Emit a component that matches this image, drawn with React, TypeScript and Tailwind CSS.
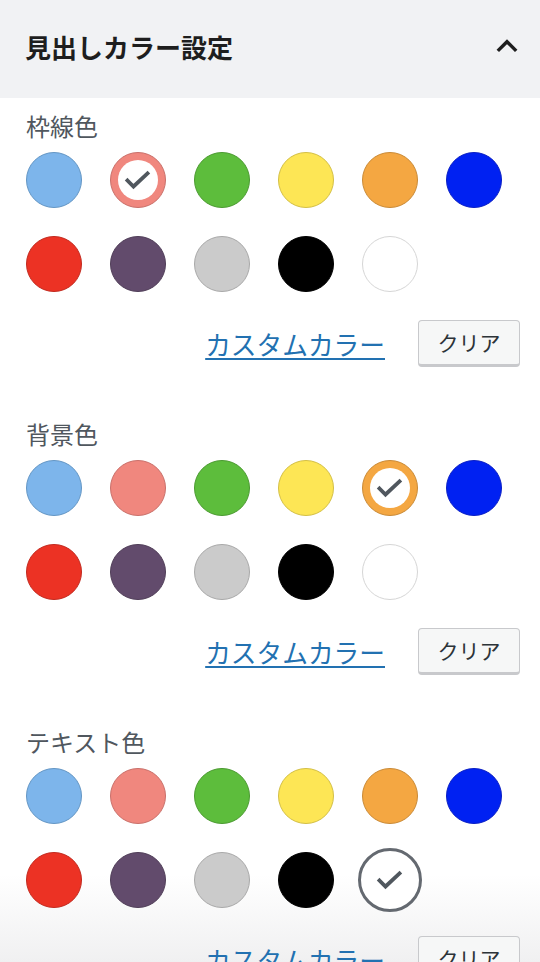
import { useState } from "react";

type Swatch = { color: string; border: string };

const swatches: Swatch[] = [
  { color: "#7db5eb", border: "#6496c4" },
  { color: "#f0877e", border: "#c9706a" },
  { color: "#5dbd3c", border: "#4b9a31" },
  { color: "#fde655", border: "#d3bf46" },
  { color: "#f4a742", border: "#c98a37" },
  { color: "#0021f2", border: "#0a1fc4" },
  { color: "#ec3224", border: "#c22a1f" },
  { color: "#624b6c", border: "#503e58" },
  { color: "#cbcbcb", border: "#a9a9a9" },
  { color: "#000000", border: "#000000" },
  { color: "#ffffff", border: "#d6d6d6" },
];

const Check = () => (
  <svg width="28" height="28" viewBox="0 0 28 28" fill="none">
    <path d="M3.5 14.5l6 6L23.5 7.5" stroke="#50575e" strokeWidth="3.8" strokeLinecap="square" />
  </svg>
);

const ColorSection = ({ label, initial }: { label: string; initial: number }) => {
  const [selected, setSelected] = useState<number>(initial);
  return (
    <div className="mb-[52px]">
      <div className="text-[24px] leading-[30px] text-[#50575e]">{label}</div>
      <div className="mt-[11px] flex w-[476px] flex-wrap gap-[28px]">
        {swatches.map((s, i) => {
          const isSel = selected === i;
          const isWhite = s.color === "#ffffff";
          if (isSel && isWhite) {
            return (
              <button
                key={i}
                onClick={() => setSelected(i)}
                className="-m-[4px] flex h-[64px] w-[64px] items-center justify-center rounded-full border-[3px] border-[#646970] bg-white"
              >
                <Check />
              </button>
            );
          }
          return (
            <button
              key={i}
              onClick={() => setSelected(i)}
              className="flex h-[56px] w-[56px] items-center justify-center rounded-full border-[1.5px]"
              style={{ backgroundColor: s.color, borderColor: s.border }}
            >
              {isSel && (
                <span className="flex h-[40px] w-[40px] items-center justify-center rounded-full bg-white">
                  <Check />
                </span>
              )}
            </button>
          );
        })}
      </div>
      <div className="mt-[28px] flex items-center justify-end pr-[20px]">
        <a href="#" className="mr-[33px] text-[25.7px] leading-[30px] text-[#2271b1] underline decoration-2 underline-offset-[3px]">
          カスタムカラー
        </a>
        <button
          onClick={() => setSelected(-1)}
          className="flex h-[47px] w-[102px] items-center justify-center rounded-[4px] border border-b-[3px] border-[#c8c9cc] bg-[#f6f7f7] text-[21px] text-[#2c3338]"
        >
          クリア
        </button>
      </div>
    </div>
  );
};

export default function App() {
  return (
    <div
      className="h-[962px] w-[540px] overflow-hidden bg-[linear-gradient(to_bottom,#ffffff_0px,#ffffff_875px,#f0f0f1_962px)]"
      style={{ fontFamily: '"Noto Sans CJK JP", "Noto Sans", sans-serif' }}
    >
      <div className="flex h-[98px] items-center justify-between bg-[#f1f2f4] pb-[6px] pl-[25px] pr-[20px]">
        <h2 className="text-[26px] font-bold text-[#1e1e1e]">見出しカラー設定</h2>
        <svg width="26" height="26" viewBox="0 0 24 24" fill="none">
          <path d="M3.5 16.5L12 8l8.5 8.5" stroke="#1e1e1e" strokeWidth="3.2" />
        </svg>
      </div>
      <div className="pl-[26px] pt-[13px]">
        <ColorSection label="枠線色" initial={1} />
        <ColorSection label="背景色" initial={4} />
        <ColorSection label="テキスト色" initial={10} />
      </div>
    </div>
  );
}
